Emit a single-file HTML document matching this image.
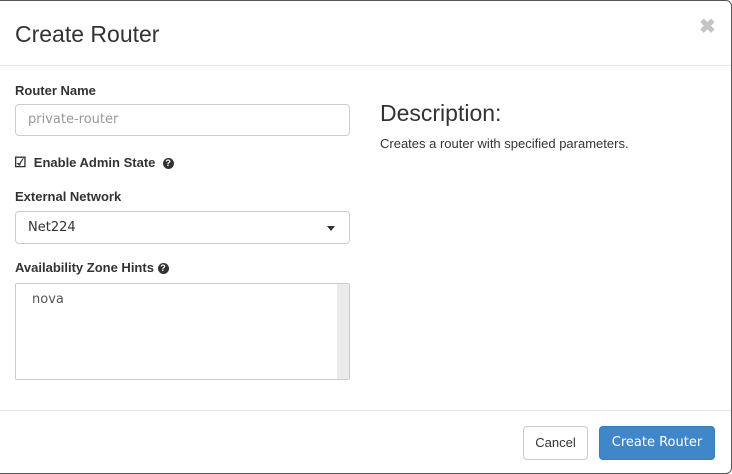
<!DOCTYPE html>
<html><head><style>
*{box-sizing:border-box;margin:0;padding:0}
body{width:732px;height:474px;background:#fff;font-family:"Liberation Sans",sans-serif;color:#333;position:relative;overflow:hidden}
.modal{position:absolute;left:0;top:0;width:732px;height:474px;border:1px solid #555;border-left:none;border-radius:0 6px 6px 0;background:#fff}
.abs{position:absolute}
.lbl{position:absolute;left:15px;font-weight:bold;font-size:13px;color:#333}
.inp{position:absolute;left:15px;width:335px;border:1px solid #ccc;border-radius:4px;font-family:"DejaVu Sans",sans-serif;font-size:13px}
.q{display:inline-block;width:11px;height:11px;border-radius:50%;background:#333;color:#fff;font-size:9px;text-align:center;line-height:11px;font-weight:bold;vertical-align:1px}
</style></head><body>
<div class="modal">
<div class="abs" style="left:15px;top:20px;font-size:23px;color:#333">Create Router</div>
<div class="abs" style="left:699px;top:13px;font-size:20px;font-weight:bold;color:#c4c4c4">✖</div>
<div class="abs" style="left:0;top:64px;width:731px;height:1px;background:#e5e5e5"></div>
<div class="lbl" style="top:82px">Router Name</div>
<div class="inp" style="top:103px;height:32px;padding:7px 12px;color:#999">private-router</div>
<div class="abs" style="left:14px;top:153px;font-size:13px;font-weight:bold"><span style="font-size:14px">☑</span>&nbsp; Enable Admin State &nbsp;<span class="q">?</span></div>
<div class="lbl" style="top:188px">External Network</div>
<div class="inp" style="top:210px;height:33px;padding:8px 12px;color:#333">Net224<span style="position:absolute;right:14px;top:14px;border-left:4px solid transparent;border-right:4px solid transparent;border-top:5px solid #333"></span></div>
<div class="lbl" style="top:259px">Availability Zone Hints <span class="q">?</span></div>
<div class="inp" style="top:282px;height:97px;border-radius:2px;color:#555;padding:8px 16px;overflow:hidden">nova<div style="position:absolute;right:0;top:0;width:12px;height:100%;background:#ebebeb"></div></div>
<div class="abs" style="left:380px;top:99px;font-size:23px;color:#333">Description:</div>
<div class="abs" style="left:380px;top:135px;font-size:13px;color:#333">Creates a router with specified parameters.</div>
<div class="abs" style="left:0;top:409px;width:731px;height:1px;background:#e5e5e5"></div>
<div class="abs" style="left:523px;top:425px;width:65px;height:34px;border:1px solid #ccc;border-radius:4px;font-size:13px;text-align:center;line-height:32px;color:#333">Cancel</div>
<div class="abs" style="left:599px;top:425px;width:116px;height:34px;background:#3f87c9;border:1px solid #3a7cbb;border-radius:4px;font-family:'DejaVu Sans',sans-serif;font-size:13px;text-align:center;line-height:32px;color:#fff">Create Router</div>
</div>
</body></html>
